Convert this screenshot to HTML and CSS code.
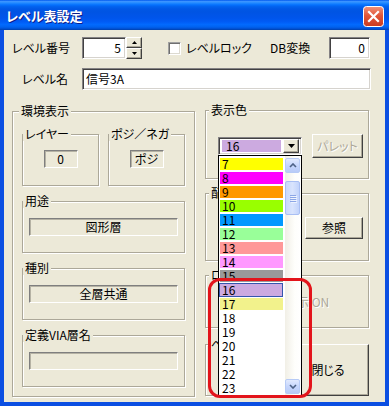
FILE: index.html
```html
<!DOCTYPE html>
<html lang="ja">
<head>
<meta charset="utf-8">
<title>レベル表設定</title>
<link rel="stylesheet" href="styles.css">
</head>
<body>
<div class="window">
  <div class="titlebar">
    <span class="title">レベル表設定</span>
    <span class="close">
      <svg width="21" height="21" viewBox="0 0 21 21">
        <defs>
          <linearGradient id="cg" x1="0" y1="0" x2="0" y2="1">
            <stop offset="0" stop-color="#F0937A"/>
            <stop offset="0.45" stop-color="#E2573A"/>
            <stop offset="1" stop-color="#C93A1E"/>
          </linearGradient>
        </defs>
        <rect x="0.5" y="0.5" width="20" height="20" rx="3" fill="url(#cg)" stroke="#fff"/>
        <path d="M6 6 L15 15 M15 6 L6 15" stroke="#fff" stroke-width="2.2" stroke-linecap="square"/>
      </svg>
    </span>
  </div>
  <div class="frame">
    <div class="client">
      <div class="row row1">
        <span class="lbl lbl-col">レベル番号</span>
        <div class="edit edit-num">5</div>
        <div class="spin">
          <span class="btn spin-btn"><svg width="5" height="3" viewBox="0 0 5 3"><path d="M2.5 0 L5 3 L0 3 Z" fill="#000"/></svg></span>
          <span class="btn spin-btn"><svg width="5" height="3" viewBox="0 0 5 3"><path d="M0 0 L5 0 L2.5 3 Z" fill="#000"/></svg></span>
        </div>
        <span class="check"></span>
        <span class="lbl lbl-lock">レベルロック</span>
        <span class="lbl lbl-db">DB変換</span>
        <div class="edit edit-db">0</div>
      </div>
      <div class="row row2">
        <span class="lbl lbl-col">レベル名</span>
        <div class="edit edit-name">信号3A</div>
      </div>

      <div class="main">
        <div class="group outer">
          <span class="gtitle">環境表示</span>
          <div class="pair">
            <div class="group inner small">
              <span class="gtitle">レイヤー</span>
              <div class="static narrow">0</div>
            </div>
            <div class="group inner small">
              <span class="gtitle">ポジ／ネガ</span>
              <div class="static narrow">ポジ</div>
            </div>
          </div>
          <div class="group inner wide">
            <span class="gtitle">用途</span>
            <div class="static">図形層</div>
          </div>
          <div class="group inner wide">
            <span class="gtitle">種別</span>
            <div class="static">全層共通</div>
          </div>
          <div class="group inner wide">
            <span class="gtitle">定義VIA層名</span>
            <div class="static"></div>
          </div>
        </div>

        <div class="rightcol">
          <div class="group rg g1">
            <span class="gtitle">表示色</span>
            <div class="g1-row">
              <div class="combo">
                <span class="swatch c16">16</span>
                <span class="btn combo-btn"><svg width="7" height="4" viewBox="0 0 7 4"><path d="M0 0 L7 0 L3.5 4 Z" fill="#000"/></svg></span>
              </div>
              <span class="btn palette disabled">パレット</span>
            </div>
          </div>
          <div class="group rg g2">
            <span class="gtitle">配</span>
            <span class="btn ref">参照</span>
          </div>
          <div class="group rg g3">
            <span class="gtitle">ロ</span>
            <span class="disabled on-text">示 ON</span>
          </div>
          <div class="g4">
            <div class="group rg g4-group">
              <span class="gtitle">ペ</span>
            </div>
            <span class="btn closebtn">閉じる</span>
          </div>
        </div>
      </div>
    </div>
  </div>

  <div class="dropdown">
    <div class="items">
      <div class="item"><span class="bar c7">7</span></div>
      <div class="item"><span class="bar c8">8</span></div>
      <div class="item"><span class="bar c9">9</span></div>
      <div class="item"><span class="bar c10">10</span></div>
      <div class="item"><span class="bar c11">11</span></div>
      <div class="item"><span class="bar c12">12</span></div>
      <div class="item"><span class="bar c13">13</span></div>
      <div class="item"><span class="bar c14">14</span></div>
      <div class="item"><span class="bar c15">15</span></div>
      <div class="item"><span class="bar c16 selected">16</span></div>
      <div class="item"><span class="bar c17">17</span></div>
      <div class="item"><span class="bar">18</span></div>
      <div class="item"><span class="bar">19</span></div>
      <div class="item"><span class="bar">20</span></div>
      <div class="item"><span class="bar">21</span></div>
      <div class="item"><span class="bar">22</span></div>
      <div class="item"><span class="bar">23</span></div>
    </div>
    <div class="scrollbar">
      <span class="sb-btn sb-up"><svg width="8" height="5" viewBox="0 0 8 5"><path d="M1 4 L4 1 L7 4" fill="none" stroke="#4D6185" stroke-width="1.6"/></svg></span>
      <span class="sb-thumb"><i></i><i></i><i></i><i></i></span>
      <span class="sb-btn sb-down"><svg width="8" height="5" viewBox="0 0 8 5"><path d="M1 1 L4 4 L7 1" fill="none" stroke="#4D6185" stroke-width="1.6"/></svg></span>
    </div>
  </div>

  <div class="annot"></div>
</div>
</body>
</html>
```

FILE: styles.css
```css
* { box-sizing: border-box; }
html, body { margin: 0; padding: 0; }
body {
  width: 389px;
  height: 406px;
  overflow: hidden;
  background: #0A47D8;
  font-family: "Noto Sans CJK JP", sans-serif;
  font-size: 12px;
  font-feature-settings: "palt";
  color: #000;
}

.window {
  position: relative;
  width: 389px;
  height: 406px;
  display: flex;
  flex-direction: column;
}

/* ---------- title bar ---------- */
.titlebar {
  height: 30px;
  flex: none;
  display: flex;
  align-items: center;
  justify-content: space-between;
  padding: 0 5px 0 6px;
  background: linear-gradient(to bottom,
    #0058EE 0%, #3A93FF 5%, #288EFF 9%, #127DFF 13%, #036FFC 17%,
    #0262EE 22%, #0057E5 30%, #0054E3 40%, #0055EB 60%, #005BF5 72%,
    #026AFE 82%, #0062EF 90%, #0052D6 95%, #0040AB 100%);
}
.title {
  color: #fff;
  font-weight: bold;
  font-size: 13px;
  line-height: 16px;
  text-shadow: 1px 1px 0 #0A1E8C;
  margin-top: 2px;
}
.close {
  width: 21px;
  height: 21px;
  display: flex;
  margin-top: 3px;
}

/* ---------- frame ---------- */
.frame {
  flex: 1;
  border: 4px solid #0B4FE2;
  border-top: none;
  box-shadow: inset 1px 0 0 #0A3FC8, inset -1px 0 0 #0A3FC8;
  display: flex;
}
.client {
  flex: 1;
  background: #ECE9D8;
  padding: 7px 0 0 8px;
}

/* ---------- rows ---------- */
.row {
  display: flex;
  align-items: center;
  height: 22px;
}
.row2 { margin-top: 9px; }

.lbl { line-height: 14px; white-space: nowrap; }
.lbl-col { width: 56px; margin-right: 14px; text-align: right; }
.lbl-lock { width: 84px; margin-left: 5px; }
.lbl-db { width: 59px; }

.edit {
  height: 22px;
  background: #fff;
  border: 1px solid;
  border-color: #848284 #fff #fff #848284;
  box-shadow: inset 1px 1px 0 #424142, inset -1px -1px 0 #D6D3CE;
  line-height: 18px;
  padding: 1px 4px 0 3px;
  white-space: nowrap;
}
.edit-num { width: 44px; text-align: right; }
.edit-db { width: 41px; text-align: right; }
.edit-name { width: 289px; }

.btn {
  display: flex;
  align-items: center;
  justify-content: center;
  background: #ECE9D8;
  border: 1px solid;
  border-color: #fff #404040 #404040 #fff;
  box-shadow: inset -1px -1px 0 #ACA899;
  line-height: 14px;
}

.spin {
  width: 16px;
  height: 22px;
  display: flex;
  flex-direction: column;
}
.spin-btn { height: 11px; }

.check {
  width: 13px;
  height: 13px;
  margin-left: 26px;
  background: #fff;
  border: 1px solid;
  border-color: #A0A0A0 #fff #fff #A0A0A0;
  box-shadow: inset 1px 1px 0 #6F6F6F, inset -1px -1px 0 #DCDAD0;
}

/* ---------- groups ---------- */
.main {
  display: grid;
  grid-template-columns: 183px 164px;
  column-gap: 10px;
  margin-top: 20px;
  align-items: start;
}

.group {
  border: 1px solid #ACA899;
  box-shadow: inset 1px 1px 0 #fff, 1px 1px 0 #fff;
}
.gtitle {
  display: block;
  width: max-content;
  height: 14px;
  line-height: 14px;
  margin-top: -8px;
  padding: 0 2px;
  background: #ECE9D8;
  white-space: nowrap;
}

.outer {
  height: 286px;
  margin-top: 1px;
  padding: 0 9px 9px;
}
.outer > .gtitle { margin-left: -3px; }

.pair {
  display: flex;
  gap: 9px;
  margin-top: 16px;
}
.inner {
  height: 52px;
  padding: 0 6px;
}
.inner > .gtitle { margin-left: -6px; }
.small {
  width: 77px;
  display: flex;
  flex-direction: column;
  align-items: center;
}
.small > .gtitle { align-self: flex-start; }
.wide { margin-top: 15px; }

.static {
  height: 18px;
  border: 1px solid;
  border-color: #7F7F7F #fff #fff #7F7F7F;
  box-shadow: inset 1px 1px 0 #B5B2A4;
  text-align: center;
  line-height: 15px;
  margin-top: 10px;
}
.small .static { margin-top: 9px; }
.narrow { width: 34px; }

.rightcol {
  display: flex;
  flex-direction: column;
}
.rg { padding: 0 0 0 12px; }
.rg > .gtitle { margin-left: -9px; }

.g1 { height: 69px; }
.g1-row {
  display: flex;
  align-items: center;
  margin-top: 17px;
  height: 24px;
}
.combo {
  width: 84px;
  height: 18px;
  display: flex;
  align-items: center;
  background: #fff;
  border: 1px solid;
  border-color: #848284 #fff #fff #848284;
  box-shadow: inset 1px 1px 0 #424142, inset -1px -1px 0 #D6D3CE;
  padding: 0 2px 0 2px;
}
.swatch {
  width: 61px;
  height: 12px;
  margin-left: 1px;
  line-height: 12px;
  padding-left: 4px;
}
.combo-btn {
  width: 16px;
  height: 14px;
  margin-left: 2px;
}
.palette {
  width: 51px;
  height: 24px;
  margin-left: 10px;
}
.disabled {
  color: #ACA899;
  text-shadow: 1px 1px 0 #fff;
}

.g2 {
  height: 68px;
  margin-top: 14px;
}
.ref {
  width: 58px;
  height: 22px;
  margin-top: 17px;
  margin-left: 87px;
}

.g3 {
  height: 53px;
  margin-top: 14px;
}
.on-text {
  display: block;
  margin-top: 13px;
  margin-left: 79px;
  line-height: 14px;
  white-space: nowrap;
}

.g4 {
  display: flex;
  margin-top: 16px;
  height: 52px;
}
.g4-group { width: 82px; height: 52px; }
.closebtn {
  width: 82px;
  height: 52px;
  margin-left: 2px;
  flex: none;
}

/* ---------- dropdown list ---------- */
.dropdown {
  position: absolute;
  left: 218px;
  top: 155px;
  width: 84px;
  height: 241px;
  border: 1px solid #000;
  background: #fff;
  display: flex;
}
.items {
  width: 66px;
  padding-top: 1px;
}
.item {
  height: 14px;
  padding: 1px 2px 1px 1px;
}
.bar {
  display: block;
  height: 12px;
  line-height: 12px;
  padding-left: 2px;
  font-size: 12px;
}
.bar.selected {
  height: 14px;
  margin: -1px 0 -1px -1px;
  border: 1px solid #3556AE;
  line-height: 12px;
  padding-left: 2px;
}

.c7 { background: #FFFF00; }
.c8 { background: #FF00FF; }
.c9 { background: #FF9900; }
.c10 { background: #99FF00; }
.c11 { background: #0099FF; }
.c12 { background: #99FF99; }
.c13 { background: #FF9999; }
.c14 { background: #FF99FF; }
.c15 { background: #999999; }
.c16 { background: #CCAAE0; }
.c17 { background: #F2F28C; }

.scrollbar {
  width: 16px;
  display: flex;
  flex-direction: column;
  background: linear-gradient(to right, #F1EFE6, #FEFEFB 60%, #FFFFFF);
}
.sb-btn {
  width: 15px;
  height: 15px;
  display: flex;
  align-items: center;
  justify-content: center;
  border: 1px solid #B7CBF6;
  border-radius: 2px;
  background: linear-gradient(to bottom, #E2EAFE, #C6D6FC 50%, #B8CBF8);
}
.sb-up { margin-top: 2px; }
.sb-down { margin-top: auto; margin-bottom: 1px; }
.sb-thumb {
  width: 15px;
  height: 34px;
  margin-top: 8px;
  border: 1px solid #A9BFF3;
  border-radius: 2px;
  background: linear-gradient(to right, #C9D8FC, #D9E4FD 50%, #C2D3FB);
  display: flex;
  flex-direction: column;
  align-items: center;
  justify-content: center;
  gap: 1px;
}
.sb-thumb i {
  display: block;
  width: 6px;
  height: 1px;
  background: #8CA6E6;
  box-shadow: 1px 1px 0 #EEF3FE;
}

/* ---------- annotation ---------- */
.annot {
  position: absolute;
  left: 208px;
  top: 278px;
  width: 104px;
  height: 120px;
  border: 3px solid #E3141B;
  border-radius: 12px;
}
```
